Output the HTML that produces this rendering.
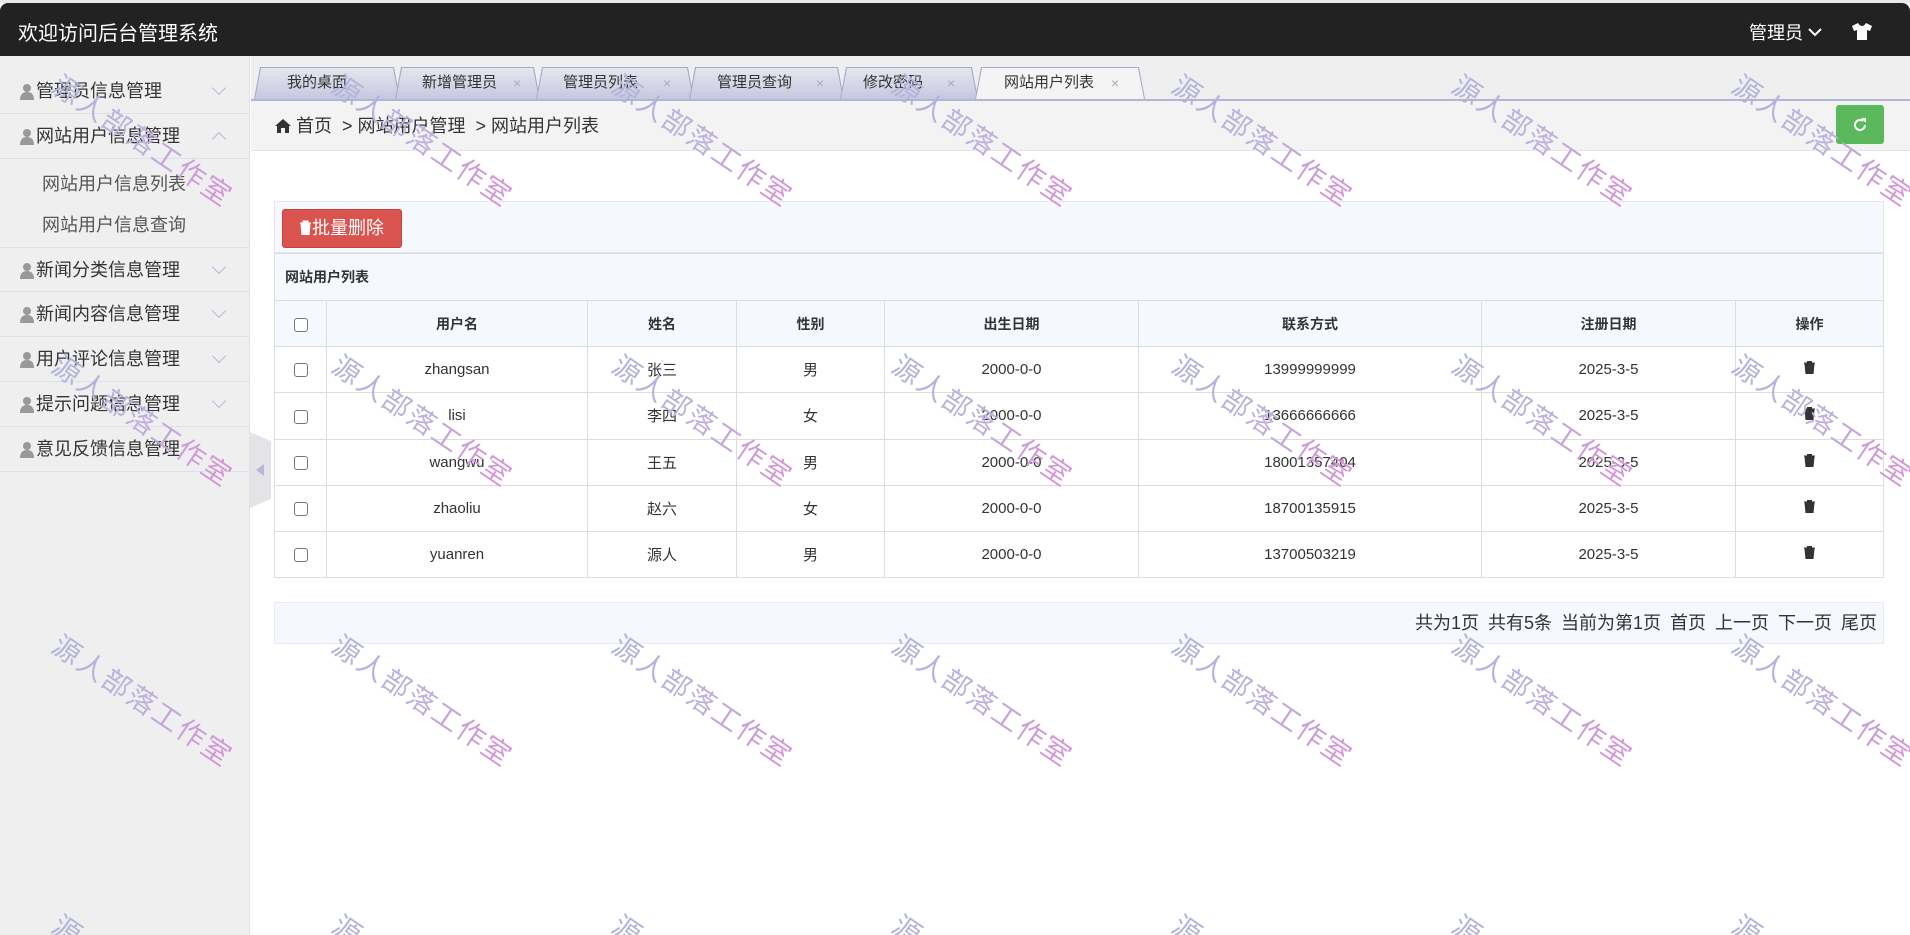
<!DOCTYPE html>
<html style="width:1910px;height:935px;overflow:hidden"><head><meta charset="utf-8">
<style>
*{box-sizing:border-box;margin:0;padding:0}
body{width:1910px;height:935px;overflow:hidden;background:#fff;font-family:"Liberation Sans","Noto Sans CJK SC",sans-serif;position:relative;color:#333}
.top{position:absolute;left:0;top:0;width:1910px;height:3px;background:#e8e8e8}
.hdr{position:absolute;left:0;top:3px;width:1910px;height:53px;background:#222;border-radius:8px 8px 0 0;color:#fff}
.hdr .t{position:absolute;left:18px;top:14px;font-size:20px}
.hdr .u{position:absolute;left:1749px;top:16px;font-size:18px}
.side{position:absolute;left:0;top:56px;width:250px;height:879px;background:#efefef;border-right:1px solid #e2e2e2}
.mi{position:absolute;left:0;width:250px;height:45px;border-bottom:1px solid #e0e0e8;font-size:18px;line-height:44px;padding-left:36px;color:#333}
.mi .ic{position:absolute;left:20px;top:14px}
.mi .ar{position:absolute;left:214px;top:14px;width:10px;height:10px;border-right:1.5px solid #b8b8d8;border-bottom:1.5px solid #b8b8d8;transform:rotate(45deg)}
.mi .ar.up{transform:rotate(-135deg);top:20px}
.sub{position:absolute;left:42px;font-size:18px;color:#555;line-height:24px}
.tabbar{position:absolute;left:251px;top:56px;width:1659px;height:45px;background:#efefef;border-bottom:2px solid #b4b4d4}
.tab{position:absolute;top:11px;height:32px;clip-path:polygon(6px 0,calc(100% - 6px) 0,100% 100%,0 100%);background:#a8a8c8}
.tab i{position:absolute;left:1px;top:1px;right:1px;bottom:0;clip-path:polygon(6px 0,calc(100% - 6px) 0,100% 100%,0 100%);background:linear-gradient(#e6e6ee,#c6c8e0);font-style:normal;font-size:15px;color:#333;line-height:30px}
.tab.act i{background:#f4f4f4}
.tab b{font-weight:normal;color:#aab;position:absolute;font-size:14px}
.bc{position:absolute;left:251px;top:101px;width:1659px;height:50px;background:#f3f3f3;border-bottom:1px solid #e2e2ea;font-size:18px;line-height:50px;padding-left:24px}
.rf{position:absolute;left:1836px;top:105px;width:48px;height:39px;background:#5cb85c;border-radius:3px}
.panel{position:absolute;left:274px;top:201px;width:1610px}
.tool{height:52px;background:#f5f9fd;border:1px solid #e4e8ee;position:relative}
.btn{position:absolute;left:7px;top:7px;width:120px;height:39px;background:#d9534f;border:1px solid #c9403c;border-radius:3px;color:#fff;font-size:18px;line-height:37px;padding-left:16px}
table{border-collapse:collapse;width:1610px;font-size:15px}
td,th{border:1px solid #ddd;text-align:center;height:46.2px;padding:0}
th{background:#f5f9fd;font-weight:bold;font-size:14px}
.cap td{text-align:left;padding-left:10px;font-weight:bold;font-size:14px;background:#f5f9fd;height:47px}
.cb{display:inline-block;width:14px;height:14px;border:1px solid #767676;border-radius:3px;background:#fff;vertical-align:middle}
.pg{position:absolute;left:274px;top:602px;width:1610px;height:42px;background:#f5f9fd;border:1px solid #e8ecf2;text-align:right;font-size:18px;line-height:40px;padding-right:6px;word-spacing:4px}
.tog{position:absolute;left:250px;top:432px;width:21px;height:76px;background:#e4e4e8;clip-path:polygon(0 0,100% 12%,100% 88%,0 100%)}
.wm{position:absolute;font-size:28px;white-space:nowrap;transform:translate(-50%,-50%) rotate(34deg);background:linear-gradient(90deg,#b2b4da,#bdb0dc 50%,#d792d6);-webkit-background-clip:text;background-clip:text;color:transparent;letter-spacing:2px;pointer-events:none}
.wr{position:absolute;left:0;top:0;width:1910px;height:935px;overflow:hidden;pointer-events:none}
</style></head><body>
<div class="top"></div>
<div class="hdr"><div class="t">欢迎访问后台管理系统</div><div class="u">管理员 <svg width="14" height="10" viewBox="0 0 14 10" style="vertical-align:2px"><path d="M1 2l6 6 6-6" stroke="#fff" stroke-width="2" fill="none"/></svg></div>
<svg style="position:absolute;left:1851px;top:19px" width="22" height="18" viewBox="0 0 22 18"><path d="M7 1L1 4l2 5 3-1v10h10V8l3 1 2-5-6-3c-1 2-3 3-4 3s-3-1-4-3z" fill="#fff"/></svg></div>
<div class="side">
<div class="mi" style="top:13px"><svg class="ic" width="14" height="17" viewBox="0 0 14 17"><circle cx="7" cy="5" r="4" fill="#999"/><path d="M0 17c0-6 3-8 7-8s7 2 7 8z" fill="#999"/></svg>管理员信息管理<span class="ar"></span></div>
<div class="mi" style="top:58px"><svg class="ic" width="14" height="17" viewBox="0 0 14 17"><circle cx="7" cy="5" r="4" fill="#999"/><path d="M0 17c0-6 3-8 7-8s7 2 7 8z" fill="#999"/></svg>网站用户信息管理<span class="ar up"></span></div>
<div class="sub" style="top:116px">网站用户信息列表</div>
<div class="sub" style="top:157px">网站用户信息查询</div>
<div class="mi" style="top:191px;border-top:1px solid #e0e0e8"><svg class="ic" width="14" height="17" viewBox="0 0 14 17"><circle cx="7" cy="5" r="4" fill="#999"/><path d="M0 17c0-6 3-8 7-8s7 2 7 8z" fill="#999"/></svg>新闻分类信息管理<span class="ar"></span></div>
<div class="mi" style="top:236px"><svg class="ic" width="14" height="17" viewBox="0 0 14 17"><circle cx="7" cy="5" r="4" fill="#999"/><path d="M0 17c0-6 3-8 7-8s7 2 7 8z" fill="#999"/></svg>新闻内容信息管理<span class="ar"></span></div>
<div class="mi" style="top:281px"><svg class="ic" width="14" height="17" viewBox="0 0 14 17"><circle cx="7" cy="5" r="4" fill="#999"/><path d="M0 17c0-6 3-8 7-8s7 2 7 8z" fill="#999"/></svg>用户评论信息管理<span class="ar"></span></div>
<div class="mi" style="top:326px"><svg class="ic" width="14" height="17" viewBox="0 0 14 17"><circle cx="7" cy="5" r="4" fill="#999"/><path d="M0 17c0-6 3-8 7-8s7 2 7 8z" fill="#999"/></svg>提示问题信息管理<span class="ar"></span></div>
<div class="mi" style="top:371px"><svg class="ic" width="14" height="17" viewBox="0 0 14 17"><circle cx="7" cy="5" r="4" fill="#999"/><path d="M0 17c0-6 3-8 7-8s7 2 7 8z" fill="#999"/></svg>意见反馈信息管理</div>
</div>
<div class="tog"><svg style="position:absolute;left:6px;top:32px" width="8" height="12"><path d="M8 0L0 6l8 6z" fill="#b8b8d8"/></svg></div>
<div class="tabbar">
<div class="tab" style="left:3px;width:146px"><i style="padding-left:32px">我的桌面</i></div>
<div class="tab" style="left:144px;width:145px"><i style="padding-left:26px">新增管理员<b style="left:117px">×</b></i></div>
<div class="tab" style="left:285px;width:158px"><i style="padding-left:26px">管理员列表<b style="left:126px">×</b></i></div>
<div class="tab" style="left:438px;width:155px"><i style="padding-left:27px">管理员查询<b style="left:126px">×</b></i></div>
<div class="tab" style="left:589px;width:138px"><i style="padding-left:22px">修改密码<b style="left:106px">×</b></i></div>
<div class="tab act" style="left:724px;width:170px"><i style="padding-left:28px">网站用户列表<b style="left:135px">×</b></i></div>
</div>
<div class="bc"><svg width="16" height="14" viewBox="0 0 16 14" style="vertical-align:-1px"><path d="M8 0L0 7h2v7h4V9h4v5h4V7h2z" fill="#333"/></svg> 首页 &nbsp;&gt; 网站用户管理 &nbsp;&gt; 网站用户列表</div>
<div class="rf"><svg style="position:absolute;left:16px;top:12px" width="16" height="16" viewBox="0 0 16 16"><path d="M13 8a5 5 0 1 1-2-4" stroke="#fff" stroke-width="2" fill="none"/><path d="M9 1h5v5z" fill="#fff"/></svg></div>
<div class="panel">
<div class="tool"><div class="btn"><svg width="13" height="15" viewBox="0 0 13 15" style="vertical-align:-1px"><path d="M1 3h11M4 3V1h5v2M2 4l1 11h7l1-11z" fill="#fff" stroke="#fff"/></svg>批量删除</div></div>
<table>
<tr class="cap"><td colspan="8">网站用户列表</td></tr>
<tr><th style="width:52px"><span class="cb"></span></th><th style="width:261px">用户名</th><th style="width:149px">姓名</th><th style="width:148px">性别</th><th style="width:254px">出生日期</th><th style="width:343px">联系方式</th><th style="width:254px">注册日期</th><th>操作</th></tr>
<tr><td><span class="cb"></span></td><td>zhangsan</td><td>张三</td><td>男</td><td>2000-0-0</td><td>13999999999</td><td>2025-3-5</td><td><svg width="11" height="13" viewBox="0 0 11 13"><path d="M0 2h11M3.5 2V0.5h4V2M1 3h9l-1 10H2z" fill="#333" stroke="#333" stroke-width="1"/></svg></td></tr>
<tr><td><span class="cb"></span></td><td>lisi</td><td>李四</td><td>女</td><td>2000-0-0</td><td>13666666666</td><td>2025-3-5</td><td><svg width="11" height="13" viewBox="0 0 11 13"><path d="M0 2h11M3.5 2V0.5h4V2M1 3h9l-1 10H2z" fill="#333" stroke="#333" stroke-width="1"/></svg></td></tr>
<tr><td><span class="cb"></span></td><td>wangwu</td><td>王五</td><td>男</td><td>2000-0-0</td><td>18001357404</td><td>2025-3-5</td><td><svg width="11" height="13" viewBox="0 0 11 13"><path d="M0 2h11M3.5 2V0.5h4V2M1 3h9l-1 10H2z" fill="#333" stroke="#333" stroke-width="1"/></svg></td></tr>
<tr><td><span class="cb"></span></td><td>zhaoliu</td><td>赵六</td><td>女</td><td>2000-0-0</td><td>18700135915</td><td>2025-3-5</td><td><svg width="11" height="13" viewBox="0 0 11 13"><path d="M0 2h11M3.5 2V0.5h4V2M1 3h9l-1 10H2z" fill="#333" stroke="#333" stroke-width="1"/></svg></td></tr>
<tr><td><span class="cb"></span></td><td>yuanren</td><td>源人</td><td>男</td><td>2000-0-0</td><td>13700503219</td><td>2025-3-5</td><td><svg width="11" height="13" viewBox="0 0 11 13"><path d="M0 2h11M3.5 2V0.5h4V2M1 3h9l-1 10H2z" fill="#333" stroke="#333" stroke-width="1"/></svg></td></tr>
</table>
</div>
<div class="pg">共为1页 共有5条 当前为第1页 首页 上一页 下一页 尾页</div>
<div class="wr">
<div class="wm" style="left:143px;top:140px">源人部落工作室</div><div class="wm" style="left:423px;top:140px">源人部落工作室</div><div class="wm" style="left:703px;top:140px">源人部落工作室</div><div class="wm" style="left:983px;top:140px">源人部落工作室</div><div class="wm" style="left:1263px;top:140px">源人部落工作室</div><div class="wm" style="left:1543px;top:140px">源人部落工作室</div><div class="wm" style="left:1823px;top:140px">源人部落工作室</div>
<div class="wm" style="left:143px;top:420px">源人部落工作室</div><div class="wm" style="left:423px;top:420px">源人部落工作室</div><div class="wm" style="left:703px;top:420px">源人部落工作室</div><div class="wm" style="left:983px;top:420px">源人部落工作室</div><div class="wm" style="left:1263px;top:420px">源人部落工作室</div><div class="wm" style="left:1543px;top:420px">源人部落工作室</div><div class="wm" style="left:1823px;top:420px">源人部落工作室</div>
<div class="wm" style="left:143px;top:700px">源人部落工作室</div><div class="wm" style="left:423px;top:700px">源人部落工作室</div><div class="wm" style="left:703px;top:700px">源人部落工作室</div><div class="wm" style="left:983px;top:700px">源人部落工作室</div><div class="wm" style="left:1263px;top:700px">源人部落工作室</div><div class="wm" style="left:1543px;top:700px">源人部落工作室</div><div class="wm" style="left:1823px;top:700px">源人部落工作室</div>
<div class="wm" style="left:143px;top:980px">源人部落工作室</div><div class="wm" style="left:423px;top:980px">源人部落工作室</div><div class="wm" style="left:703px;top:980px">源人部落工作室</div><div class="wm" style="left:983px;top:980px">源人部落工作室</div><div class="wm" style="left:1263px;top:980px">源人部落工作室</div><div class="wm" style="left:1543px;top:980px">源人部落工作室</div><div class="wm" style="left:1823px;top:980px">源人部落工作室</div>
</div>
</body></html>
